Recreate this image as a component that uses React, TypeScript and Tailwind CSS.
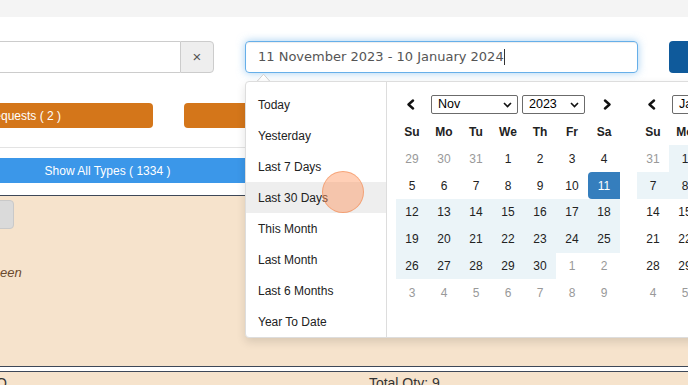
import React from 'react'

type Day = { d: number; muted?: boolean; range?: boolean; start?: boolean; end?: boolean }

const RANGES = ['Today', 'Yesterday', 'Last 7 Days', 'Last 30 Days', 'This Month', 'Last Month', 'Last 6 Months', 'Year To Date']
const WEEKDAYS = ['Su', 'Mo', 'Tu', 'We', 'Th', 'Fr', 'Sa']

const m = (d: number): Day => ({ d, muted: true })
const n = (d: number): Day => ({ d })
const r = (d: number): Day => ({ d, range: true })

const NOV: Day[][] = [
  [m(29), m(30), m(31), n(1), n(2), n(3), n(4)],
  [n(5), n(6), n(7), n(8), n(9), n(10), { d: 11, start: true }],
  [r(12), r(13), r(14), r(15), r(16), r(17), r(18)],
  [r(19), r(20), r(21), r(22), r(23), r(24), r(25)],
  [r(26), r(27), r(28), r(29), r(30), m(1), m(2)],
  [m(3), m(4), m(5), m(6), m(7), m(8), m(9)],
]

const JAN: Day[][] = [
  [m(31), r(1), r(2), r(3), r(4), r(5), r(6)],
  [r(7), r(8), r(9), { d: 10, end: true }, n(11), n(12), n(13)],
  [n(14), n(15), n(16), n(17), n(18), n(19), n(20)],
  [n(21), n(22), n(23), n(24), n(25), n(26), n(27)],
  [n(28), n(29), n(30), n(31), m(1), m(2), m(3)],
  [m(4), m(5), m(6), m(7), m(8), m(9), m(10)],
]

function Chevron({ dir }: { dir: 'left' | 'right' }) {
  return (
    <svg width="9" height="11" viewBox="0 0 9 11">
      <path
        d={dir === 'left' ? 'M7 1.5 L2.5 5.5 L7 9.5' : 'M2 1.5 L6.5 5.5 L2 9.5'}
        fill="none"
        stroke="#111"
        strokeWidth="2.4"
        strokeLinecap="round"
        strokeLinejoin="round"
      />
    </svg>
  )
}

function FakeSelect({ label, width }: { label: string; width: string }) {
  return (
    <div className={`${width} h-[19px] border border-[#6b6b6b] rounded-[2px] flex items-center justify-between pl-[6px] pr-[5px] text-[12.5px] text-black bg-white`}>
      <span>{label}</span>
      <svg width="9" height="6" viewBox="0 0 9 6">
        <path d="M1 1 L4.5 4.5 L8 1" fill="none" stroke="#111" strokeWidth="1.6" />
      </svg>
    </div>
  )
}

function Calendar({ month, year, rows }: { month: string; year: string; rows: Day[][] }) {
  return (
    <div className="w-[241px] shrink-0 pl-[9px] pr-[8px] pt-[13px]">
      <div className="flex h-[19px] items-center">
        <div className="w-[35px] pl-[10px] flex items-center">
          <Chevron dir="left" />
        </div>
        <FakeSelect label={month} width="w-[87px]" />
        <div className="ml-[4px]">
          <FakeSelect label={year} width="w-[63px]" />
        </div>
        <div className="w-[35px] pl-[18px] flex items-center">
          <Chevron dir="right" />
        </div>
      </div>
      <div className="mt-[4.7px] grid grid-cols-7 w-[224px]">
        {WEEKDAYS.map((w) => (
          <div key={w} className="h-[26.8px] flex items-center justify-center font-bold text-[12px] text-[#222]">
            {w}
          </div>
        ))}
        {rows.flat().map((day, i) => (
          <div
            key={i}
            className={`h-[26.8px] flex items-center justify-center text-[12px] ${
              day.start
                ? 'bg-[#357ebd] text-white rounded-l-[4px]'
                : day.end
                ? 'bg-[#357ebd] text-white rounded-r-[4px]'
                : day.range
                ? 'bg-[#ebf4f8] text-[#222]'
                : day.muted
                ? 'text-[#999]'
                : 'text-[#222]'
            }`}
          >
            {day.d}
          </div>
        ))}
      </div>
    </div>
  )
}

export default function App() {
  return (
    <div className="relative w-[688px] h-[385px] overflow-hidden bg-white font-['Liberation_Sans',Arial,sans-serif]">
      <div className="h-[17px] bg-[#f4f4f4]" />

      {/* Toolbar */}
      <div className="mt-[24px] flex h-[32px]">
        <div className="ml-[-40px] w-[254px] flex shrink-0">
          <div className="flex-1 border border-r-0 border-[#ccc] bg-white" />
          <div className="w-[34px] border border-[#ccc] bg-[#eee] rounded-r-[4px] flex items-center justify-center text-[15px] text-[#555]">
            ×
          </div>
        </div>
        <div className="ml-[31px] w-[393px] shrink-0 border border-[#66afe9] rounded-[4px] shadow-[inset_0_1px_1px_rgba(0,0,0,0.075),0_0_8px_rgba(102,175,233,0.6)] flex items-center pl-[12px] text-[13px] text-[#555] font-['DejaVu_Sans',Verdana,sans-serif]">
          <span>11 November 2023 - 10 January 2024</span>
          <span className="inline-block w-px h-[16px] bg-[#333]" />
        </div>
        <div className="ml-[31px] w-[60px] shrink-0 bg-[#0f5a9b] rounded-[4px]" />
      </div>

      {/* Status buttons */}
      <div className="mt-[30px] flex h-[25px]">
        <div className="ml-[-60px] w-[213px] shrink-0 bg-[#d4761a] rounded-[4px] flex items-center justify-end pr-[92px] text-[12px] text-white">
          Requests ( 2 )
        </div>
        <div className="ml-[31px] w-[200px] shrink-0 bg-[#d4761a] rounded-[4px]" />
      </div>

      <div className="mt-[19px] h-px bg-[#e3e3e3]" />

      <div className="mt-[10px] ml-[-30px] w-[275px] h-[25px] bg-[#3b97e9] flex items-center justify-center text-[12px] text-white">
        Show All Types ( 1334 )
      </div>

      <div className="mt-[12px] h-px bg-[#3e4858]" />

      {/* Detail area */}
      <div className="h-[170px] bg-[#f6e3cc] pt-[4px]">
        <div className="ml-[-30px] w-[44px] h-[29px] bg-[#dadada] border border-[#c9c9c9] rounded-[4px]" />
        <div className="mt-[34px] italic text-[13px] text-[#6b4a2e]">een</div>
      </div>

      <div className="h-px bg-[#3e4858]" />
      <div className="h-[4px] bg-white" />
      <div className="h-px bg-[#3e4858]" />
      <div className="h-[20px] bg-[#f6e3cc] flex pt-[3px] leading-[16px] text-[14px] text-[#333]">
        <span className="ml-[-4px]">Q</span>
        <span className="ml-[362px]">Total Qty: 9</span>
      </div>

      {/* Date range picker popup */}
      <svg className="absolute left-[256px] top-[73px]" width="15" height="9" viewBox="0 0 15 9">
        <path d="M0 9 L7.5 1 L15 9 Z" fill="#fff" />
        <path d="M0.5 9 L7.5 1.2 L14.5 9" fill="none" stroke="#cfcfcf" strokeWidth="1" />
      </svg>
      <div className="absolute left-[245px] top-[81px] w-[500px] h-[257px] bg-white border border-[#ddd] rounded-[4px] shadow-[0_4px_10px_rgba(0,0,0,0.12)] flex">
        <div className="w-[141px] shrink-0 border-r border-[#ddd] pt-[7px] h-[255px]">
          {RANGES.map((label) => (
            <div
              key={label}
              className={`h-[31px] flex items-center pl-[12px] text-[12px] text-[#222] ${label === 'Last 30 Days' ? 'bg-[#eee]' : ''}`}
            >
              {label}
            </div>
          ))}
        </div>
        <Calendar month="Nov" year="2023" rows={NOV} />
        <Calendar month="Jan" year="2024" rows={JAN} />
      </div>

      {/* Cursor highlight */}
      <div className="absolute left-[322px] top-[171px] w-[42px] h-[42px] rounded-full bg-[rgba(255,140,80,0.42)] border border-[rgba(240,130,70,0.55)]" />
    </div>
  )
}
